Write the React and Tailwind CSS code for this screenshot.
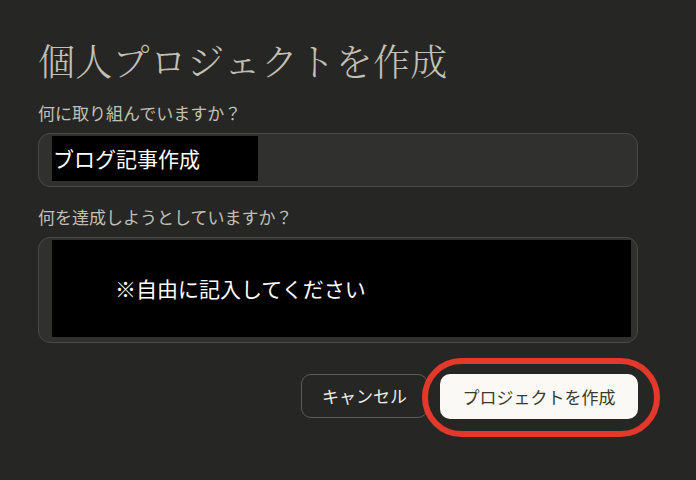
import React from "react";

export default function App() {
  const sans = { fontFamily: "'Noto Sans CJK JP', 'Noto Sans', sans-serif" };
  const serif = { fontFamily: "'Noto Serif CJK JP', 'Noto Sans CJK JP', serif" };
  return (
    <div className="w-[696px] h-[480px] bg-[#262624] overflow-hidden" style={sans}>
      <div className="w-[600px] ml-[38px] pt-[36px] flex flex-col">
        <h1 className="h-[48px] leading-[48px] text-[37px] font-light text-[#c2c0b6] tracking-[0.3px] whitespace-nowrap" style={serif}>
          個人プロジェクトを作成
        </h1>
        <label className="mt-[17px] h-[24px] leading-[24px] text-[17px] text-[#c2c0b6]">
          何に取り組んでいますか？
        </label>
        <div className="mt-[8px] h-[54px] rounded-[12px] border border-[#4a4945] bg-[#30302e] pl-[13px] pt-[2px]">
          <div className="w-[206px] h-[45px] bg-black flex items-center text-[21px] leading-none text-white pl-[1px]">
            ブログ記事作成
          </div>
        </div>
        <label className="mt-[18px] h-[24px] leading-[24px] text-[17px] text-[#c2c0b6]">
          何を達成しようとしていますか？
        </label>
        <div className="mt-[8px] h-[106px] rounded-[12px] border border-[#4a4945] bg-[#30302e] pl-[13px] pr-[6px] pt-[2px]">
          <div className="h-[97px] bg-black flex items-center text-[21px] leading-none text-white pl-[63px]">
            ※自由に記入してください
          </div>
        </div>
        <div className="mt-[31px] flex justify-end gap-[12px]">
          <button className="w-[127px] h-[44px] rounded-[10px] border border-[#5c5b57] bg-transparent text-[17px] text-[#f0eee6]">
            キャンセル
          </button>
          <div className="relative">
            <button className="w-[198px] h-[45px] rounded-[10px] bg-[#faf9f5] text-[17px] text-[#3d3929]">
              プロジェクトを作成
            </button>
            <div className="absolute -left-[18px] -right-[22px] -top-[16px] -bottom-[18px] rounded-[40px] border-[6px] border-[#e2392c] pointer-events-none" />
          </div>
        </div>
      </div>
    </div>
  );
}
